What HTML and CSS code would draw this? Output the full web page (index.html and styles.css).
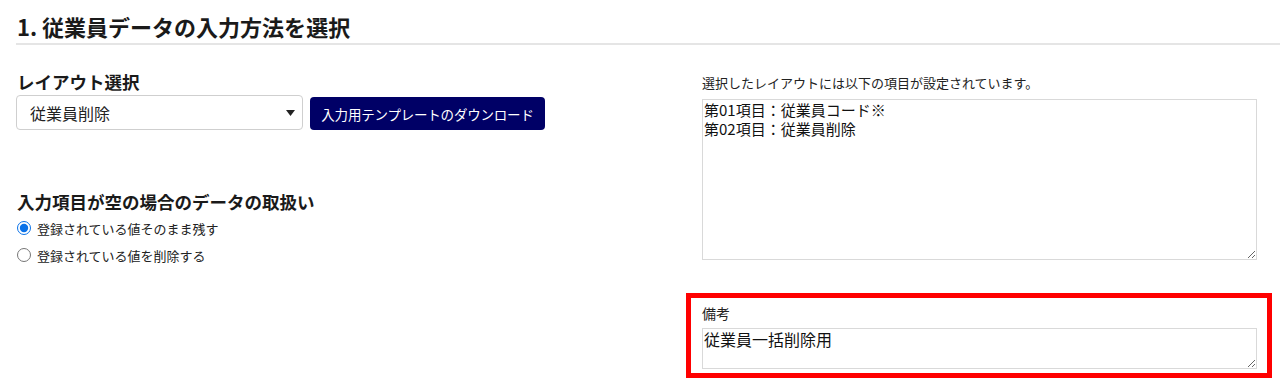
FILE: index.html
```html
<!DOCTYPE html>
<html lang="ja">
<head>
<meta charset="utf-8">
<title>従業員データの入力方法を選択</title>
<link rel="stylesheet" href="styles.css">
</head>
<body>
<div class="page">
  <h1 class="section-title">1. 従業員データの入力方法を選択</h1>
  <div class="columns">
    <div class="col-left">
      <h2 class="field-heading first">レイアウト選択</h2>
      <div class="layout-row">
        <div class="select-wrap">
          <select class="select">
            <option>従業員削除</option>
          </select>
          <svg class="select-arrow" width="9" height="6" viewBox="0 0 9 6"><path d="M0 0H9L4.5 6Z" fill="#222"/></svg>
        </div>
        <button class="btn-download" type="button">入力用テンプレートのダウンロード</button>
      </div>
      <h2 class="field-heading second">入力項目が空の場合のデータの取扱い</h2>
      <label class="radio-row"><input type="radio" name="empty" class="radio" checked><span>登録されている値そのまま残す</span></label>
      <label class="radio-row"><input type="radio" name="empty" class="radio"><span>登録されている値を削除する</span></label>
    </div>
    <div class="col-right">
      <div class="info-label">選択したレイアウトには以下の項目が設定されています。</div>
      <textarea class="items-box" readonly>第01項目：従業員コード※
第02項目：従業員削除</textarea>
      <div class="highlight">
        <div class="note-label">備考</div>
        <textarea class="note-box">従業員一括削除用</textarea>
      </div>
    </div>
  </div>
</div>
</body>
</html>
```
FILE: styles.css
```css
html, body {
  margin: 0;
  padding: 0;
  background: #fff;
}
body {
  font-family: "Noto Sans CJK JP", "Noto Sans", sans-serif;
  color: #222;
}
.page {
  padding-left: 16px;
  width: 1264px;
  overflow: hidden;
}
.section-title {
  margin: 12px 0 0;
  font-size: 22px;
  line-height: 28px;
  font-weight: 700;
  padding: 0 0 3px 1px;
  border-bottom: 2px solid #e5e5e5;
  color: #1a1a1a;
}
.columns {
  display: grid;
  grid-template-columns: 670px 555px;
  column-gap: 16px;
}
.field-heading {
  margin: 0;
  font-size: 17.5px;
  line-height: 22px;
  font-weight: 700;
  padding-left: 1px;
  color: #1a1a1a;
}
.field-heading.first {
  margin-top: 26px;
  margin-bottom: 2px;
}
.field-heading.second {
  margin-top: 61px;
  margin-bottom: 2px;
}
.layout-row {
  display: flex;
  align-items: flex-end;
  gap: 7px;
}
.select-wrap {
  position: relative;
  width: 287px;
  height: 35px;
}
.select {
  -webkit-appearance: none;
  appearance: none;
  width: 100%;
  height: 100%;
  box-sizing: border-box;
  border: 1px solid #cfcfcf;
  border-radius: 4px;
  background: #fff;
  padding: 0 0 0 13px;
  font-family: inherit;
  font-size: 16px;
  color: #222;
}
.select-arrow {
  position: absolute;
  right: 8px;
  top: 15px;
  pointer-events: none;
}
.btn-download {
  width: 235px;
  height: 33px;
  border: none;
  border-radius: 4px;
  background: #000066;
  color: #fff;
  font-family: inherit;
  font-size: 13.5px;
  padding: 0;
  letter-spacing: -0.2px;
}
.radio-row {
  display: flex;
  align-items: center;
  height: 26px;
  font-size: 13px;
  margin-bottom: 1px;
  color: #222;
}
.radio {
  width: 14px;
  height: 14px;
  margin: 0 6px 0 1px;
  accent-color: #0a72e8;
}
.info-label {
  margin-top: 29px;
  font-size: 13px;
  line-height: 18px;
  color: #222;
}
.items-box {
  display: block;
  margin-top: 7px;
  width: 555px;
  height: 161px;
  box-sizing: border-box;
  border: 1px solid #d9d9d9;
  padding: 0 1px;
  font-family: inherit;
  font-size: 15px;
  line-height: 19px;
  color: #111;
  resize: vertical;
}
.highlight {
  margin: 33px -15px 0 -16px;
  border: 5px solid #ff0000;
  padding: 6px 10px 4px 11px;
}
.note-label {
  font-size: 14px;
  line-height: 18px;
  color: #222;
}
.note-box {
  display: block;
  margin-top: 6px;
  width: 555px;
  height: 41px;
  box-sizing: border-box;
  border: 1px solid #d9d9d9;
  padding: 0 1px;
  font-family: inherit;
  font-size: 16px;
  line-height: 20px;
  color: #111;
  resize: vertical;
}
```
